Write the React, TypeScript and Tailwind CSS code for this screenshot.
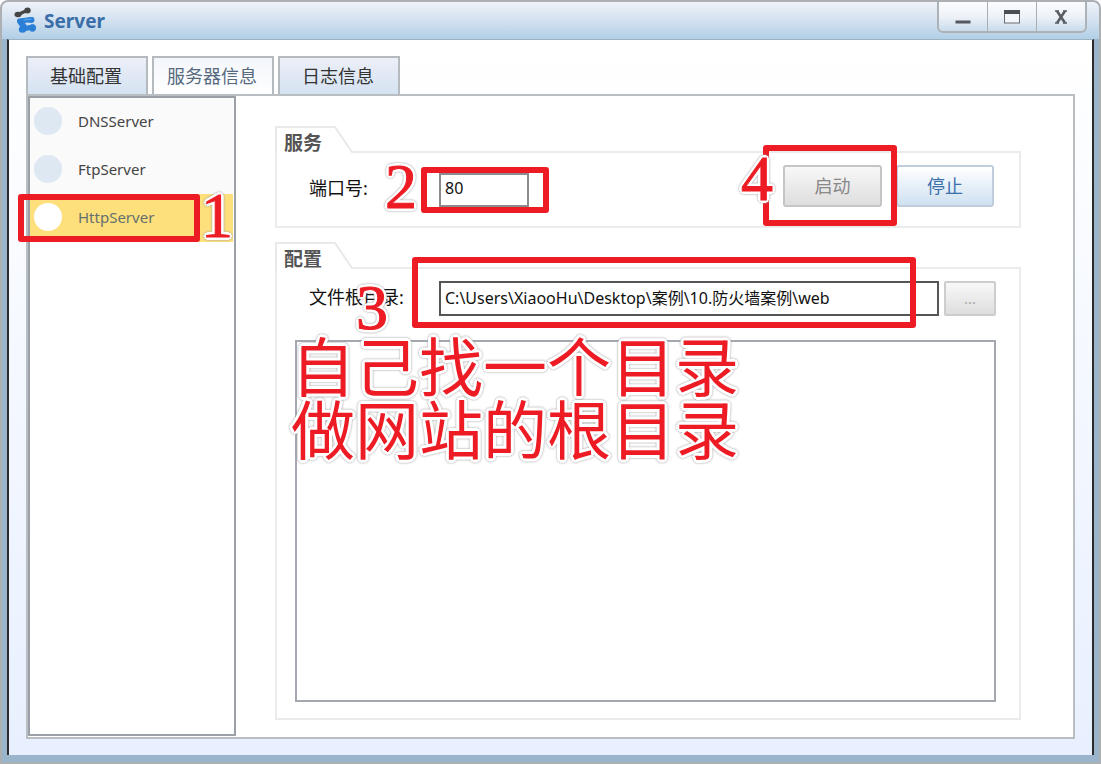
import { useState } from "react"
import type { ReactNode } from "react"

const tabs = ["基础配置", "服务器信息", "日志信息"]
const servers = ["DNSServer", "FtpServer", "HttpServer"]

// Red pen strokes with a white halo and a thin grey edge
const penText =
  "pointer-events-none absolute text-[#ed1c24] [text-shadow:3px_0_0_#fff,-3px_0_0_#fff,0_3px_0_#fff,0_-3px_0_#fff,2px_2px_0_#fff,-2px_2px_0_#fff,2px_-2px_0_#fff,-2px_-2px_0_#fff] [filter:drop-shadow(0_0_1px_#999)]"

const MarkBox = ({ className }: { className: string }) => (
  <div
    className={`pointer-events-none absolute z-10 rounded-[3px] border-6 border-[#ed1c24] ${className}`}
  />
)

const Mark = ({ className, children }: { className: string; children: ReactNode }) => (
  <span
    className={`${penText} z-20 font-['Liberation_Serif',serif] text-[64px] leading-[44px] [-webkit-text-stroke:1px_#ed1c24] ${className}`}
  >
    {children}
  </span>
)

const Logo = () => (
  <svg width="22" height="28" viewBox="0 0 22 28" strokeLinecap="round" aria-hidden="true">
    <g stroke="#454545" fill="#454545">
      <path d="M4 7.500L13 3.500" strokeWidth="3.400" />
      <ellipse cx="4" cy="7.500" rx="3.500" ry="2.700" stroke="none" />
      <ellipse cx="13.500" cy="3.500" rx="3.200" ry="2.900" stroke="none" />
    </g>
    <g stroke="#2b7fd6" fill="none">
      <path d="M5.500 14L17.500 12.500" strokeWidth="5" />
      <path d="M6.500 15L10 20" strokeWidth="6" />
      <path d="M8.500 22L19 20" strokeWidth="5" />
    </g>
    <g fill="#2b7fd6">
      <ellipse cx="17" cy="13" rx="3.500" ry="3" />
      <ellipse cx="8.500" cy="22.500" rx="3.700" ry="3.300" />
      <ellipse cx="18.500" cy="21" rx="3.500" ry="3.700" />
    </g>
    <path d="M10 13L17 12" stroke="#63abe8" strokeWidth="1.200" />
  </svg>
)

const TitleBar = () => (
  <header className="flex h-[37px] items-start justify-between rounded-t-md bg-linear-to-b from-[#eff2f9] via-[#d3e1f0] to-[#b1cfe6] pr-3 pl-3">
    <div className="flex items-center gap-2 pt-1">
      <Logo />
      <h1 className="pt-px text-[19px] leading-7 font-bold text-[#3a6ea8]">Server</h1>
    </div>
    <div className="flex h-[31px] overflow-hidden rounded-b-md border-2 border-t-0 border-[#adb2b7] bg-linear-to-b from-[#fbfcfe] via-[#eef2f8] to-[#c9dcec]">
      <button aria-label="最小化" className="flex w-12 justify-center">
        <svg width="16" height="30" viewBox="0 0 16 30">
          <rect x="0.500" y="18.500" width="15" height="3" fill="#55585f" />
        </svg>
      </button>
      <button
        aria-label="最大化"
        className="flex w-[50px] justify-center border-x border-[#a9aeb3]"
      >
        <svg width="18" height="30" viewBox="0 0 18 30">
          <rect x="1.500" y="8.500" width="15" height="12.500" fill="#f3f6fa" stroke="#6a6d74" />
          <rect x="1" y="8" width="16" height="4" fill="#4b4e55" />
        </svg>
      </button>
      <button aria-label="关闭" className="flex w-12 justify-center">
        <svg width="14" height="30" viewBox="0 0 14 30" stroke="#5a5d64">
          <path d="M3 9L11 21M11 9L3 21" strokeWidth="2.600" />
          <path d="M1 9h4M9 9h4M1 21h4M9 21h4" strokeWidth="1.500" />
        </svg>
      </button>
    </div>
  </header>
)

interface GroupProps {
  id: string
  title: string
  className?: string
  children: ReactNode
}

const Group = ({ id, title, className = "", children }: GroupProps) => (
  <section aria-labelledby={id} className={`flex flex-col ${className}`}>
    <div className="flex h-[27px] items-end">
      <div className="relative h-[27px] w-[78px] shrink-0">
        <svg className="absolute inset-0" width="78" height="27" viewBox="0 0 78 27" fill="none">
          <path d="M1 27V1H60L77 26H78" stroke="#e9e9e9" strokeWidth="2" />
        </svg>
        <h2
          id={id}
          className="relative pt-1 pl-[9px] text-[19px] leading-[26px] font-bold text-[#555]"
        >
          {title}
        </h2>
      </div>
      <div className="h-[2px] flex-1 bg-[#ebebeb]" />
    </div>
    <div className="flex flex-1 flex-col border-2 border-t-0 border-[#ebebeb]">{children}</div>
  </section>
)

const App = () => {
  const [tab, setTab] = useState(1)
  const [server, setServer] = useState("HttpServer")

  return (
    <div className="flex min-h-screen flex-col rounded-t-lg border-2 border-[#adb0b3] bg-[#9ab4cb] font-['Noto_Sans','Noto_Sans_CJK_SC',sans-serif] text-[#111]">
      <TitleBar />
      <main className="mx-[5px] mb-[7px] flex flex-1 flex-col border-x-2 border-t border-x-[#2b2b2b] border-t-[#9eb3c2] bg-linear-to-b from-white to-[#e8f0ff] px-[17px] pt-4 pb-4">
        {/* Tabs */}
        <div role="tablist" className="flex gap-1">
          {tabs.map((name, i) => (
            <button
              key={name}
              role="tab"
              aria-selected={i === tab}
              onClick={() => setTab(i)}
              className={`h-[38px] w-[122px] border-2 border-b-0 border-[#b5babf] pr-[2px] text-[18px] ${
                i === tab
                  ? "bg-linear-to-b from-[#f3f6fb] to-white text-[#56697d]"
                  : "bg-linear-to-b from-[#eceff8] to-[#d5e2f1] text-[#333]"
              }`}
            >
              {name}
            </button>
          ))}
        </div>

        <div className="flex flex-1 border-2 border-[#b9bec2] bg-white pb-px">
          {/* Server list */}
          <ul className="flex w-[208px] shrink-0 flex-col border-2 border-[#9a9fa8] pr-px">
            {servers.map((name) => (
              <li key={name} className="relative bg-[#fafafa]">
                <button
                  onClick={() => setServer(name)}
                  className={`flex h-12 w-full items-center gap-4 pb-[2px] pl-1 text-left text-[15px] ${
                    name === server ? "bg-[#fddf7b] text-[#66706f]" : "text-[#444]"
                  }`}
                >
                  <span
                    className={`size-7 rounded-full ${name === server ? "bg-white" : "bg-[#dde8f2]"}`}
                  />
                  {name}
                </button>
                {name === "HttpServer" && (
                  <>
                    <MarkBox className="top-0 -left-3 h-12 w-[182px]" />
                    <Mark className="top-0 left-[171px]">1</Mark>
                  </>
                )}
              </li>
            ))}
          </ul>

          <div className="flex flex-1 flex-col gap-[14px] pt-[30px] pr-[52px] pb-4 pl-[39px]">
            <Group id="service" title="服务">
              <div className="flex items-start justify-between pt-3 pr-[25px] pb-[19px] pl-8">
                <div className="relative flex items-center pt-2">
                  <label htmlFor="port" className="w-[130px] pb-1 text-[18px] leading-6">
                    端口号:
                  </label>
                  <input
                    id="port"
                    defaultValue="80"
                    className="h-[34px] w-[90px] border-2 border-[#8c8c8c] bg-white px-1 pb-1 text-[16px]"
                  />
                  <Mark className="top-0 left-[76px]">2</Mark>
                  <MarkBox className="top-[2px] left-[112px] h-[46px] w-32" />
                </div>
                <div className="relative flex gap-[14px]">
                  <button className="h-[42px] w-[99px] rounded-[3px] border-2 border-[#c5c5c5] bg-linear-to-b from-[#f8f8f8] to-[#dedede] text-[18px] text-[#888]">
                    启动
                  </button>
                  <button className="h-[42px] w-[98px] rounded-[3px] border-2 border-[#c0cddd] bg-linear-to-b from-white to-[#cfe1f1] text-[18px] text-[#3a70ab]">
                    停止
                  </button>
                  <MarkBox className="-top-5 -left-5 h-[81px] w-[134px]" />
                  <Mark className="-top-2 -left-[42px]">4</Mark>
                </div>
              </div>
            </Group>

            <Group id="config" title="配置" className="flex-1">
              <div className="relative flex items-center pt-3 pr-[23px] pl-8">
                <label htmlFor="root-dir" className="w-[130px] shrink-0 pb-1 text-[18px] leading-6">
                  文件根目录:
                </label>
                <input
                  id="root-dir"
                  defaultValue="C:\Users\XiaooHu\Desktop\案例\10.防火墙案例\web"
                  className="h-[35px] min-w-0 flex-1 border-2 border-[#555] bg-white px-1 pb-1 text-[16px]"
                />
                <button className="ml-[5px] h-[35px] w-[52px] rounded-[2px] border-2 border-[#cdcdcd] bg-linear-to-b from-[#f8f8f8] to-[#dedede] text-[15px] text-[#aaa]">
                  ...
                </button>
                <Mark className="top-[17px] left-[79px]">3</Mark>
                <MarkBox className="-top-3 right-[103px] left-[135px] h-[71px]" />
              </div>
              <div className="relative mt-6 mr-[23px] mb-4 ml-[18px] flex flex-1">
                <textarea
                  aria-labelledby="config"
                  className="flex-1 resize-none border-2 border-[#a3a8b0] bg-white"
                />
                <p
                  className={`${penText} -top-[5px] -left-1 text-[64px] leading-[63px] whitespace-nowrap`}
                >
                  自己找一个目录
                  <br />
                  做网站的根目录
                </p>
              </div>
            </Group>
          </div>
        </div>
      </main>
    </div>
  )
}

export default App
